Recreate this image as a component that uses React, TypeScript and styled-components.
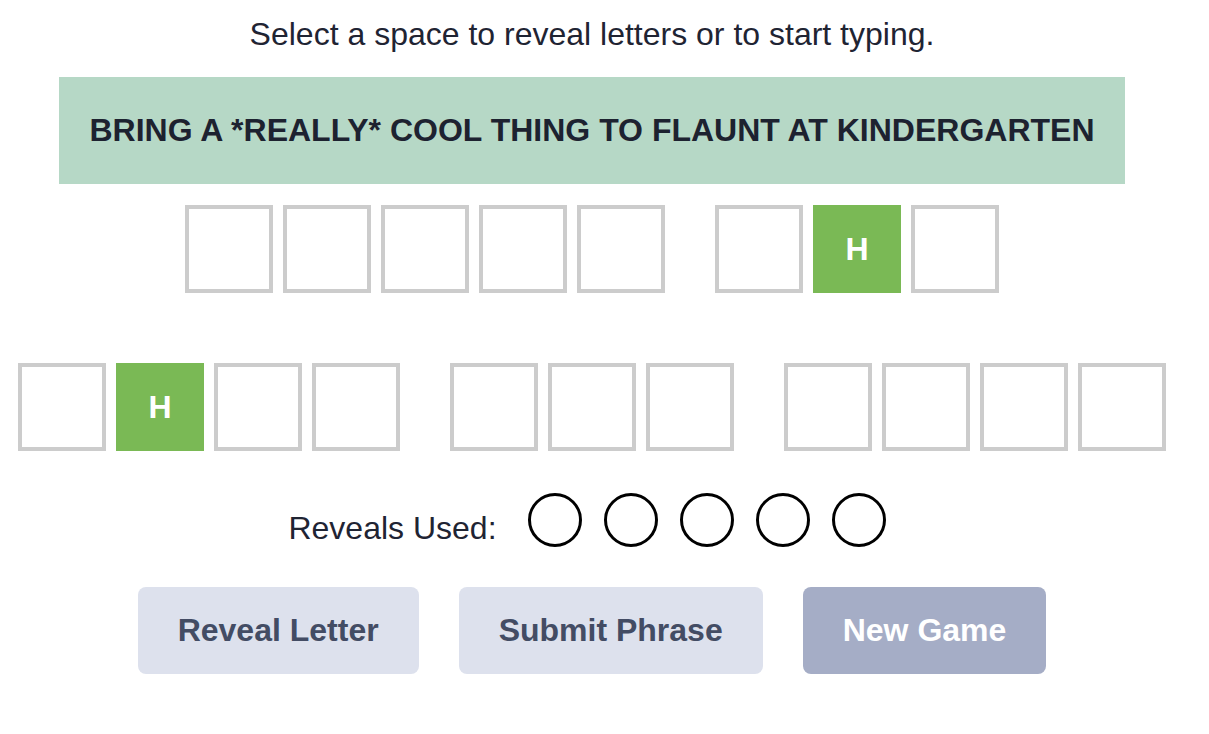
import React from 'react';
import styled, { createGlobalStyle } from 'styled-components';

const GlobalStyle = createGlobalStyle`
    body {
        margin: 0;
        background: #ffffff;
        font-family: "Liberation Sans", Arial, Helvetica, sans-serif;
        color: #1f2433;
    }
`;

const Page = styled.main`
    width: 1184px;
    display: flex;
    flex-direction: column;
    align-items: center;
`;

const Instructions = styled.p`
    margin: 16px 0 0;
    font-size: 32px;
    line-height: 36px;
    color: #1f2433;
`;

const Banner = styled.div`
    margin-top: 25px;
    width: 1066px;
    height: 107px;
    background: #b6d8c6;
    display: flex;
    align-items: center;
    justify-content: center;
    font-size: 32px;
    font-weight: 700;
    color: #1d2230;
`;

const Board = styled.div`
    margin-top: 21px;
    display: flex;
    flex-direction: column;
    align-items: center;
    gap: 70px;
`;

const Line = styled.div`
    display: flex;
    gap: 50px;
`;

const Word = styled.div`
    display: flex;
    gap: 10px;
`;

const Tile = styled.div<{ $revealed?: boolean }>`
    box-sizing: border-box;
    width: 88px;
    height: 88px;
    border: ${(p) => (p.$revealed ? 'none' : '4px solid #cccccc')};
    background: ${(p) => (p.$revealed ? '#7ab955' : '#ffffff')};
    color: #ffffff;
    display: flex;
    align-items: center;
    justify-content: center;
    font-size: 32px;
    font-weight: 700;
`;

const Reveals = styled.div`
    margin-top: 42px;
    padding-right: 10px;
    display: flex;
    align-items: center;
    gap: 22px;
`;

const RevealsLabel = styled.span`
    font-size: 32px;
    line-height: 36px;
    margin-right: 9px;
    padding-top: 16px;
`;

const Dot = styled.span`
    box-sizing: border-box;
    width: 54px;
    height: 54px;
    border: 3px solid #000000;
    border-radius: 50%;
`;

const Actions = styled.div`
    margin-top: 40px;
    display: flex;
    gap: 40px;
`;

const Button = styled.button<{ $primary?: boolean }>`
    height: 87px;
    padding: 0 40px;
    border: none;
    border-radius: 8px;
    background: ${(p) => (p.$primary ? '#a5adc6' : '#dde1ed')};
    color: ${(p) => (p.$primary ? '#ffffff' : '#434c64')};
    font-family: "Liberation Sans", Arial, Helvetica, sans-serif;
    font-size: 32px;
    font-weight: 700;
    cursor: pointer;
`;

const lines: string[][] = [
    ['     ', ' H '],
    [' H  ', '   ', '    '],
];

const App: React.FC = () => {
    return (
        <>
            <GlobalStyle />
            <Page>
                <Instructions>Select a space to reveal letters or to start typing.</Instructions>
                <Banner>BRING A *REALLY* COOL THING TO FLAUNT AT KINDERGARTEN</Banner>
                <Board>
                    {lines.map((line, i) => (
                        <Line key={i}>
                            {line.map((word, j) => (
                                <Word key={j}>
                                    {word.split('').map((ch, k) => (
                                        <Tile key={k} $revealed={ch !== ' '}>
                                            {ch !== ' ' ? ch : null}
                                        </Tile>
                                    ))}
                                </Word>
                            ))}
                        </Line>
                    ))}
                </Board>
                <Reveals>
                    <RevealsLabel>Reveals Used:</RevealsLabel>
                    {[0, 1, 2, 3, 4].map((n) => (
                        <Dot key={n} />
                    ))}
                </Reveals>
                <Actions>
                    <Button>Reveal Letter</Button>
                    <Button>Submit Phrase</Button>
                    <Button $primary>New Game</Button>
                </Actions>
            </Page>
        </>
    );
};

export default App;
